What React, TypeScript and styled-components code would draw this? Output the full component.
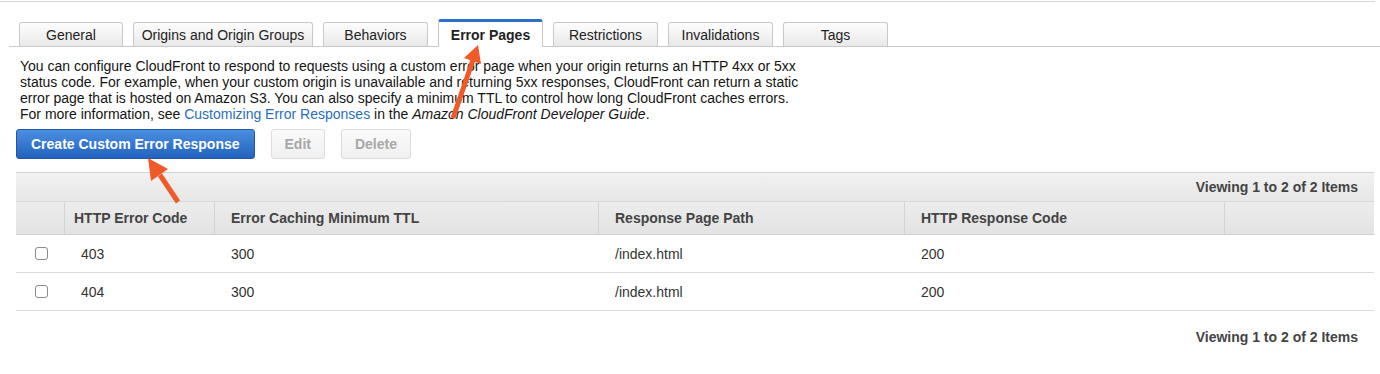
import styled, { createGlobalStyle } from "styled-components";

const GlobalStyle = createGlobalStyle`
  body {
    margin: 0;
    background: #fff;
    font-family: "Liberation Sans", Arial, Helvetica, sans-serif;
    color: #1a1a1a;
  }
`;

const Page = styled.div`
  position: relative;
  width: 1380px;
  height: 374px;
  overflow: hidden;
`;

const TopRule = styled.div`
  margin: 1px 5px 0 0;
  border-top: 1px solid #d6d6d6;
`;

const TabBar = styled.div`
  display: flex;
  align-items: flex-end;
  gap: 10px;
  margin-left: 9px;
  padding: 17px 0 0 10px;
  height: 27px;
  border-bottom: 1px solid #c9c9c9;
`;

const Tab = styled.div<{ $active?: boolean; $width: number }>`
  box-sizing: border-box;
  width: ${(p) => p.$width}px;
  height: ${(p) => (p.$active ? 28 : 24)}px;
  margin-bottom: ${(p) => (p.$active ? -1 : 0)}px;
  display: flex;
  align-items: center;
  justify-content: center;
  padding-top: ${(p) => (p.$active ? 0 : 1)}px;
  border: 1px solid #c9c9c9;
  border-bottom: none;
  border-top: ${(p) => (p.$active ? "3px solid #2b6fd1" : "1px solid #c9c9c9")};
  border-radius: 3px 3px 0 0;
  background: ${(p) =>
    p.$active ? "#fff" : "linear-gradient(#fdfdfd, #e9e9e9)"};
  font-size: 14px;
  font-weight: ${(p) => (p.$active ? 700 : 400)};
  color: #222;
  white-space: nowrap;
`;

const Content = styled.div`
  padding: 11px 6px 0 16px;
`;

const Intro = styled.p`
  margin: 0 0 0 4px;
  font-size: 14px;
  line-height: 16px;
  color: #141414;
`;

const Link = styled.a`
  color: #2a6ebb;
  text-decoration: none;
`;

const Toolbar = styled.div`
  display: flex;
  gap: 16px;
  margin-top: 7px;
`;

const Button = styled.button<{ $primary?: boolean }>`
  box-sizing: border-box;
  height: 30px;
  padding: 0 ${(p) => (p.$primary ? 14 : 13)}px;
  border-radius: 3px;
  font-family: inherit;
  font-size: 14px;
  font-weight: 700;
  border: 1px solid ${(p) => (p.$primary ? "#1f58a8" : "#dcdcdc")};
  color: ${(p) => (p.$primary ? "#fff" : "#a8a8a8")};
  background: ${(p) =>
    p.$primary
      ? "linear-gradient(#4b8fe0, #2262bd)"
      : "linear-gradient(#fafafa, #f0f0f0)"};
`;

const Table = styled.div`
  margin-top: 13px;
`;

const cols = "48px 150px 384px 306px 320px 1fr";

const Caption = styled.div`
  box-sizing: border-box;
  height: 29px;
  display: flex;
  align-items: center;
  justify-content: flex-end;
  padding-right: 16px;
  border-top: 1px solid #d2d2d2;
  background: linear-gradient(#f1f1f1, #e7e7e7);
  font-size: 14px;
  font-weight: 700;
  color: #444;
`;

const HeadRow = styled.div`
  box-sizing: border-box;
  display: grid;
  grid-template-columns: ${cols};
  height: 34px;
  border-top: 1px solid #d8d8d8;
  border-bottom: 1px solid #cfcfcf;
  background: linear-gradient(#ececec, #e3e3e3);
`;

const HeadCell = styled.div<{ $pad?: number }>`
  display: flex;
  align-items: center;
  padding-left: ${(p) => p.$pad ?? 16}px;
  border-left: 1px solid #d3d3d3;
  font-size: 14px;
  font-weight: 700;
  color: #444;
  &:first-child {
    border-left: none;
  }
`;

const Row = styled.div`
  box-sizing: border-box;
  display: grid;
  grid-template-columns: ${cols};
  height: 38px;
  border-bottom: 1px solid #dcdcdc;
`;

const Cell = styled.div<{ $center?: boolean }>`
  display: flex;
  align-items: center;
  justify-content: ${(p) => (p.$center ? "center" : "flex-start")};
  padding-left: ${(p) => (p.$center ? 0 : 17)}px;
  font-size: 14px;
  color: #333;
`;

const Check = styled.span`
  box-sizing: border-box;
  width: 13px;
  height: 13px;
  margin-left: 2px;
  border: 1px solid #8a8a8a;
  border-radius: 3px;
  background: #fff;
`;

const Footer = styled.div`
  padding: 18px 16px 0 0;
  text-align: right;
  font-size: 14px;
  line-height: 16px;
  font-weight: 700;
  color: #444;
`;

const Overlay = styled.svg`
  position: absolute;
  left: 0;
  top: 0;
  pointer-events: none;
`;

const tabs = [
  { label: "General", width: 104 },
  { label: "Origins and Origin Groups", width: 180 },
  { label: "Behaviors", width: 105 },
  { label: "Error Pages", width: 105, active: true },
  { label: "Restrictions", width: 105 },
  { label: "Invalidations", width: 105 },
  { label: "Tags", width: 105 },
];

const rows = [
  { code: "403", ttl: "300", path: "/index.html", resp: "200" },
  { code: "404", ttl: "300", path: "/index.html", resp: "200" },
];

function App() {
  return (
    <Page>
      <GlobalStyle />
      <TopRule />
      <TabBar>
        {tabs.map((t) => (
          <Tab key={t.label} $active={t.active} $width={t.width}>
            {t.label}
          </Tab>
        ))}
      </TabBar>
      <Content>
        <Intro>
          You can configure CloudFront to respond to requests using a custom error page when your origin returns an HTTP 4xx or 5xx
          <br />
          status code. For example, when your custom origin is unavailable and returning 5xx responses, CloudFront can return a static
          <br />
          error page that is hosted on Amazon S3. You can also specify a minimum TTL to control how long CloudFront caches errors.
          <br />
          For more information, see <Link href="#">Customizing Error Responses</Link> in the{" "}
          <i>Amazon CloudFront Developer Guide</i>.
        </Intro>
        <Toolbar>
          <Button $primary>Create Custom Error Response</Button>
          <Button disabled>Edit</Button>
          <Button disabled>Delete</Button>
        </Toolbar>
        <Table>
          <Caption>Viewing 1 to 2 of 2 Items</Caption>
          <HeadRow>
            <HeadCell />
            <HeadCell $pad={9}>HTTP Error Code</HeadCell>
            <HeadCell>Error Caching Minimum TTL</HeadCell>
            <HeadCell>Response Page Path</HeadCell>
            <HeadCell>HTTP Response Code</HeadCell>
            <HeadCell />
          </HeadRow>
          {rows.map((r) => (
            <Row key={r.code}>
              <Cell $center>
                <Check />
              </Cell>
              <Cell>{r.code}</Cell>
              <Cell>{r.ttl}</Cell>
              <Cell>{r.path}</Cell>
              <Cell>{r.resp}</Cell>
              <Cell />
            </Row>
          ))}
        </Table>
        <Footer>Viewing 1 to 2 of 2 Items</Footer>
      </Content>
      <Overlay width="1380" height="374" viewBox="0 0 1380 374">
        <g stroke="#f05a28" strokeWidth="5" fill="#f05a28" strokeLinecap="butt">
          <line x1="453" y1="118" x2="473" y2="60" />
          <polygon points="478,45 481,64 464,58" stroke="none" />
          <line x1="178" y1="202" x2="160" y2="175" />
          <polygon points="148,158 168,169 151,181" stroke="none" />
        </g>
      </Overlay>
    </Page>
  );
}

export default App;
